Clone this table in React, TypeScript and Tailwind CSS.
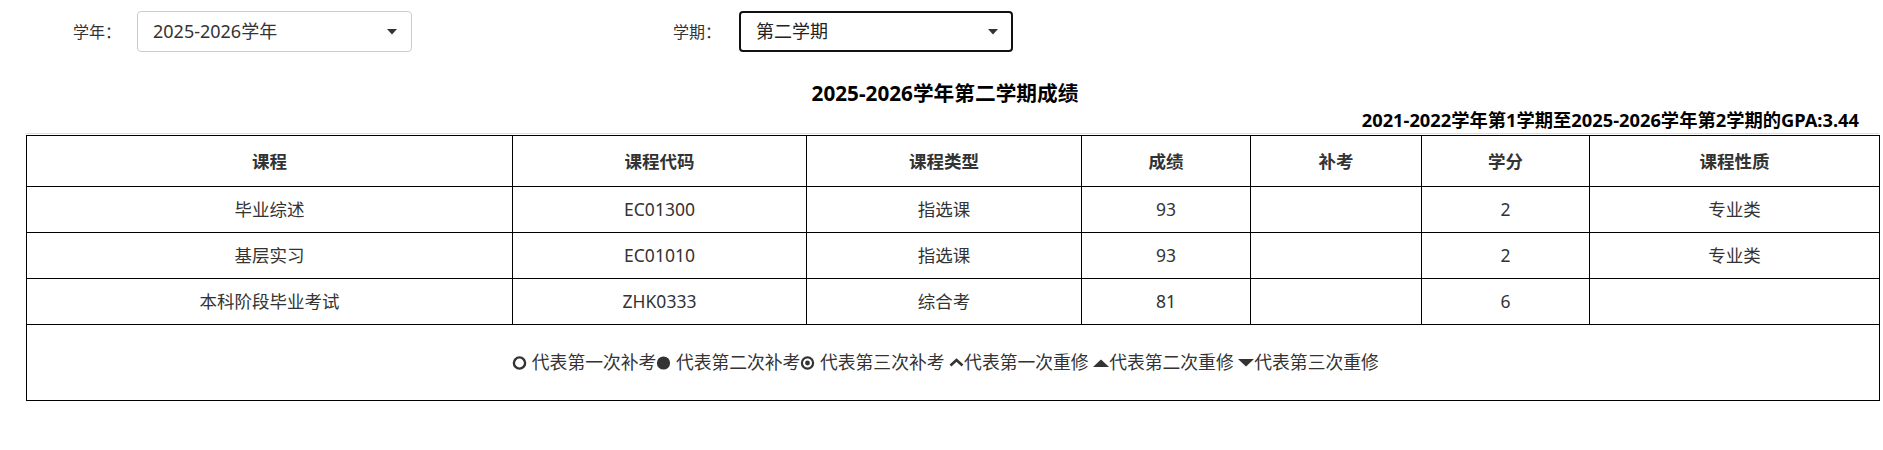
import React from 'react';

const rows = [
  { name: '毕业综述', code: 'EC01300', type: '指选课', score: '93', makeup: '', credit: '2', nature: '专业类' },
  { name: '基层实习', code: 'EC01010', type: '指选课', score: '93', makeup: '', credit: '2', nature: '专业类' },
  { name: '本科阶段毕业考试', code: 'ZHK0333', type: '综合考', score: '81', makeup: '', credit: '6', nature: '' },
];

const heads = ['课程', '课程代码', '课程类型', '成绩', '补考', '学分', '课程性质'];

const Caret = () => (
  <svg width="10" height="6" viewBox="0 0 10 6" className="shrink-0">
    <path d="M0 0 H10 L5 5.5 Z" fill="#333" />
  </svg>
);

const Icon = ({ kind }: { kind: string }) => {
  if (kind === 'ring')
    return (
      <svg width="15" height="14" viewBox="0 0 15 14" className="inline-block align-[-1px]">
        <circle cx="7.5" cy="7" r="5.6" fill="none" stroke="#333" strokeWidth="2.4" />
      </svg>
    );
  if (kind === 'dot')
    return (
      <svg width="15" height="14" viewBox="0 0 15 14" className="inline-block align-[-1px]">
        <circle cx="7.5" cy="7" r="6.6" fill="#333" />
      </svg>
    );
  if (kind === 'target')
    return (
      <svg width="15" height="14" viewBox="0 0 15 14" className="inline-block align-[-1px]">
        <circle cx="7.5" cy="7" r="5.6" fill="none" stroke="#333" strokeWidth="2.2" />
        <circle cx="7.5" cy="7" r="2.4" fill="#333" />
      </svg>
    );
  if (kind === 'chevron')
    return (
      <svg width="15" height="10" viewBox="0 0 15 10" className="inline-block align-[2px]">
        <path d="M1.5 8.5 L7.5 3 L13.5 8.5" fill="none" stroke="#333" strokeWidth="2.6" />
      </svg>
    );
  if (kind === 'up')
    return (
      <svg width="16" height="8" viewBox="0 0 16 8" className="inline-block align-[2px]">
        <path d="M0 8 H16 L8 0.5 Z" fill="#333" />
      </svg>
    );
  return (
    <svg width="16" height="8" viewBox="0 0 16 8" className="inline-block align-[2px]">
      <path d="M0 0 H16 L8 7.5 Z" fill="#333" />
    </svg>
  );
};

export default function App() {
  return (
    <div className="w-[1883px] h-[450px] bg-white text-[#333] font-['Noto_Sans','Noto_Sans_CJK_SC',sans-serif]">
      {/* filters */}
      <div className="flex items-start pt-[11px]">
        <div className="flex items-center w-[600px] pl-[73px]">
          <span className="text-[16px] w-[64px]">学年：</span>
          <div className="flex items-center justify-between w-[275px] h-[41px] border border-[#ccc] rounded-[4px] pl-[15px] pr-[14px]">
            <span className="text-[18px]">2025-2026学年</span>
            <Caret />
          </div>
        </div>
        <div className="flex items-center pl-[73px]">
          <span className="text-[16px] w-[66px]">学期：</span>
          <div className="flex items-center justify-between w-[274px] h-[41px] border-2 border-[#111] rounded-[4px] pl-[15px] pr-[13px]">
            <span className="text-[18px] text-[#222]">第二学期</span>
            <Caret />
          </div>
        </div>
      </div>

      <div className="text-center font-bold text-[20.7px] leading-[28px] text-black mt-[27px] pl-[7px]">2025-2026学年第二学期成绩</div>
      <div className="w-[1853px] ml-[26px] text-right font-bold text-[18.3px] leading-[24px] text-black pr-[20px] mt-[1px]">
        2021-2022学年第1学期至2025-2026学年第2学期的GPA:3.44
      </div>

      <div className="w-[1853px] ml-[26px] h-[2px] mt-[1px] border-t border-[#ddd]" />
      <table className="w-[1853px] ml-[26px] table-fixed border-collapse border border-black text-[17.5px]">
        <colgroup>
          <col className="w-[486px]" />
          <col className="w-[294px]" />
          <col className="w-[275px]" />
          <col className="w-[169px]" />
          <col className="w-[171px]" />
          <col className="w-[168px]" />
          <col className="w-[290px]" />
        </colgroup>
        <thead>
          <tr className="h-[51px]">
            {heads.map(h => (
              <th key={h} className="border border-black font-bold text-center p-0">{h}</th>
            ))}
          </tr>
        </thead>
        <tbody>
          {rows.map(r => (
            <tr key={r.code} className="h-[46px]">
              <td className="border border-black text-center p-0">{r.name}</td>
              <td className="border border-black text-center p-0">{r.code}</td>
              <td className="border border-black text-center p-0">{r.type}</td>
              <td className="border border-black text-center p-0">{r.score}</td>
              <td className="border border-black text-center p-0">{r.makeup}</td>
              <td className="border border-black text-center p-0">{r.credit}</td>
              <td className="border border-black text-center p-0">{r.nature}</td>
            </tr>
          ))}
          <tr className="h-[76px]">
            <td colSpan={7} className="border border-black text-center py-0 pl-0 pr-[15px] text-[17.8px]">
              <Icon kind="ring" /> 代表第一次补考<Icon kind="dot" /> 代表第二次补考<Icon kind="target" /> 代表第三次补考{' '}
              <Icon kind="chevron" />代表第一次重修 <Icon kind="up" />代表第二次重修 <Icon kind="down" />代表第三次重修
            </td>
          </tr>
        </tbody>
      </table>
    </div>
  );
}
